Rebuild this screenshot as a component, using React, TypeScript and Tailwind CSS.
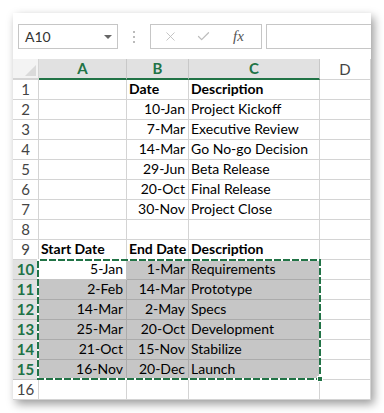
import { X, Check } from "lucide-react";

type Row = { a?: string; b?: string; c?: string; bold?: boolean };

const ROWS: Row[] = [
  { b: "Date", c: "Description", bold: true },
  { b: "10-Jan", c: "Project Kickoff" },
  { b: "7-Mar", c: "Executive Review" },
  { b: "14-Mar", c: "Go No-go Decision" },
  { b: "29-Jun", c: "Beta Release" },
  { b: "20-Oct", c: "Final Release" },
  { b: "30-Nov", c: "Project Close" },
  {},
  { a: "Start Date", b: "End Date", c: "Description", bold: true },
  { a: "5-Jan", b: "1-Mar", c: "Requirements" },
  { a: "2-Feb", b: "14-Mar", c: "Prototype" },
  { a: "14-Mar", b: "2-May", c: "Specs" },
  { a: "25-Mar", b: "20-Oct", c: "Development" },
  { a: "21-Oct", b: "15-Nov", c: "Stabilize" },
  { a: "16-Nov", b: "20-Dec", c: "Launch" },
  {},
];

const font = { fontFamily: "Lato, 'Liberation Sans', sans-serif" };

function isSel(r: number) {
  return r >= 10 && r <= 15;
}

export default function App() {
  return (
    <div className="h-[413px] w-[384px] bg-white pl-[13px] pt-[13px]" style={font}>
      <div className="h-[387px] w-[358px] overflow-hidden bg-white shadow-[3px_4px_9px_rgba(0,0,0,0.4)]">
        {/* formula bar */}
        <div className="ml-[5px] mt-[11px] flex h-[25px] items-center">
          <div className="flex h-[25px] w-[100px] items-center justify-between border border-[#c6c6c6] pl-[6px] pr-[5px] text-[14px] text-[#333]">
            <span>A10</span>
            <span className="h-0 w-0 border-x-[4px] border-t-[4px] border-x-transparent border-t-[#666]" />
          </div>
          <div className="flex w-[32px] flex-col items-center gap-[3px]">
            <span className="h-[2px] w-[2px] bg-[#bbb]" />
            <span className="h-[2px] w-[2px] bg-[#bbb]" />
            <span className="h-[2px] w-[2px] bg-[#bbb]" />
          </div>
          <div className="flex h-[25px] w-[112px] items-center border border-[#c6c6c6] pl-[12px] text-[#bdbdbd]">
            <X size={15} strokeWidth={1.4} />
            <Check size={15} strokeWidth={2} className="ml-[18px]" />
            <span
              className="ml-[22px] text-[15px] italic text-[#555]"
              style={{ fontFamily: "'Liberation Serif', serif" }}
            >
              fx
            </span>
          </div>
          <div className="ml-[4px] h-[25px] flex-1 border border-r-0 border-[#c6c6c6]" />
        </div>

        {/* grid */}
        <div className="relative mt-[10px] text-[14px] leading-none text-black">
          <div className="grid grid-cols-[26px_88px_62px_131px_1fr]">
            {/* header */}
            <div className="relative h-[21px] border-b-2 border-r border-b-[#d4d4d4] border-r-[#d4d4d4] bg-[#f3f3f3]">
              <span className="absolute bottom-[2px] right-[2px] h-0 w-0 border-b-[11px] border-l-[11px] border-b-[#dadada] border-l-transparent" />
            </div>
            {["A", "B", "C"].map((h) => (
              <div
                key={h}
                className="flex h-[21px] items-center justify-center border-b-2 border-r border-b-[#217346] border-r-[#c8c8c8] bg-[#e1e1e1] text-[15px] font-bold text-[#217346]"
              >
                {h}
              </div>
            ))}
            <div className="flex h-[21px] items-center justify-center border-b border-r border-[#d4d4d4] bg-white text-[15px] text-[#444]">
              D
            </div>

            {ROWS.map((row, i) => {
              const r = i + 1;
              const sel = isSel(r);
              const cellBase = "flex h-[20px] items-end pb-[3px] border-b border-r overflow-hidden whitespace-nowrap";
              const fill = (active: boolean) =>
                sel
                  ? active
                    ? "bg-white border-[#c6c6c6]"
                    : "bg-[#c6c6c6] border-[#ababab]"
                  : "bg-white border-[#d4d4d4]";
              const weight = row.bold ? "font-bold" : "";
              return (
                <div key={r} className="contents">
                  <div
                    className={
                      sel
                        ? "flex h-[20px] items-center justify-center border-b border-r border-[#c0c0c0] bg-[#e1e1e1] text-[15px] font-bold text-[#217346]"
                        : "flex h-[20px] items-center justify-center border-b border-r border-[#d4d4d4] bg-white text-[15px] text-[#444]"
                    }
                  >
                    {r}
                  </div>
                  <div className={`${cellBase} ${fill(r === 10)} ${weight} ${row.bold ? "justify-start pl-[2px]" : "justify-end pr-[3px]"}`}>
                    {row.a}
                  </div>
                  <div className={`${cellBase} ${fill(false)} ${weight} ${row.bold ? "justify-start pl-[2px]" : "justify-end pr-[3px]"}`}>
                    {row.b}
                  </div>
                  <div className={`${cellBase} ${fill(false)} ${weight} justify-start pl-[2px]`}>{row.c}</div>
                  <div className={`${cellBase} border-[#d4d4d4] bg-white`} />
                </div>
              );
            })}
          </div>

          {/* copy marquee */}
          <svg
            className="pointer-events-none absolute left-[24px] top-[200px]"
            width="284"
            height="121"
            viewBox="0 0 284 121"
          >
            <rect x="1" y="1" width="282" height="119" fill="none" stroke="#217346" strokeWidth="2" />
            <rect x="1" y="1" width="282" height="119" fill="none" stroke="#fff" strokeWidth="2" strokeDasharray="2 7" />
          </svg>
          <div className="absolute left-[304px] top-[317px] h-[6px] w-[6px] border border-white bg-[#217346]" />
        </div>
      </div>
    </div>
  );
}
